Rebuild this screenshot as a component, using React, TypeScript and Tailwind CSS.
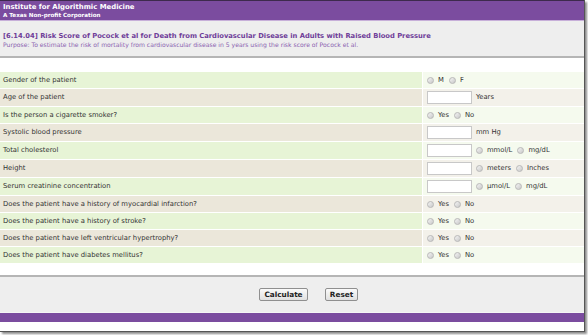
import React from 'react';

type Row = {
  label: string;
  kind: 'radio' | 'input';
  unit?: string;
  options?: string[];
};

const rows: Row[] = [
  { label: 'Gender of the patient', kind: 'radio', options: ['M', 'F'] },
  { label: 'Age of the patient', kind: 'input', unit: 'Years' },
  { label: 'Is the person a cigarette smoker?', kind: 'radio', options: ['Yes', 'No'] },
  { label: 'Systolic blood pressure', kind: 'input', unit: 'mm Hg' },
  { label: 'Total cholesterol', kind: 'input', options: ['mmol/L', 'mg/dL'] },
  { label: 'Height', kind: 'input', options: ['meters', 'Inches'] },
  { label: 'Serum creatinine concentration', kind: 'input', options: ['µmol/L', 'mg/dL'] },
  { label: 'Does the patient have a history of myocardial infarction?', kind: 'radio', options: ['Yes', 'No'] },
  { label: 'Does the patient have a history of stroke?', kind: 'radio', options: ['Yes', 'No'] },
  { label: 'Does the patient have left ventricular hypertrophy?', kind: 'radio', options: ['Yes', 'No'] },
  { label: 'Does the patient have diabetes mellitus?', kind: 'radio', options: ['Yes', 'No'] },
];

const Radio = () => (
  <span className="inline-block w-[7px] h-[7px] rounded-full border border-[#b8b8b8] bg-gradient-to-br from-[#f4f4f4] to-[#c9c9c9]" />
);

const Options: React.FC<{ options: string[] }> = ({ options }) => (
  <div className="flex items-center gap-[5px]">
    {options.map((o) => (
      <span key={o} className="flex items-center gap-[4px]">
        <Radio />
        <span>{o}</span>
      </span>
    ))}
  </div>
);

export default function App() {
  return (
    <div className="w-[588px] h-[335px] bg-white font-['DejaVu_Sans',sans-serif] text-[6.8px] text-[#333]">
      <div className="w-[585px] h-[332px] bg-white border-r border-b border-[#555] shadow-[2px_2px_2px_rgba(0,0,0,0.45)] flex flex-col">
        <div className="h-[20px] bg-[#7b4c9f] border-t border-[#3d2a4d] px-[3px] pt-[2px] text-white font-bold leading-[8px]">
          <div className="text-[6.9px]">Institute for Algorithmic Medicine</div>
          <div className="text-[5.6px]">A Texas Non-profit Corporation</div>
        </div>
        <div className="h-px bg-[#c7afd9]" />
        <div className="h-[37px] bg-[#eeeeee] border-b-2 border-[#b5b5b5] px-[3px] pt-[11px]">
          <div className="text-[6.75px] font-bold text-[#6f3d99] leading-[9px] whitespace-nowrap">
            [6.14.04] Risk Score of Pocock et al for Death from Cardiovascular Disease in Adults with Raised Blood Pressure
          </div>
          <div className="text-[6.1px] text-[#8a5fb0] leading-[8px]">
            Purpose: To estimate the risk of mortality from cardiovascular disease in 5 years using the risk score of Pocock et al.
          </div>
        </div>
        <div className="h-[14px]" />
        <div className="grid grid-cols-[422px_1fr] gap-y-px gap-x-px">
          {rows.map((r, i) => {
            const even = i % 2 === 0;
            const h = r.kind === 'input' ? 'h-[17px]' : 'h-[16px]';
            return (
              <React.Fragment key={r.label}>
                <div className={`${h} flex items-center px-[3px] ${even ? 'bg-[#e7f4d6]' : 'bg-[#ebe7da]'}`}>
                  {r.label}
                </div>
                <div className={`${h} flex items-center gap-[4px] pl-[4px] ${even ? 'bg-[#f5faee]' : 'bg-[#f3f1ea]'}`}>
                  {r.kind === 'input' && (
                    <span className="inline-block w-[45px] h-[13px] bg-white border border-[#c8c8c8]" />
                  )}
                  {r.unit && <span>{r.unit}</span>}
                  {r.options && <Options options={r.options} />}
                </div>
              </React.Fragment>
            );
          })}
        </div>
        <div className="flex-1" />
        <div className="h-[37px] bg-[#eeeeee] border-t-2 border-[#b5b5b5] flex items-center pl-[259px] gap-[17px]">
          <button className="h-[13px] w-[49px] bg-gradient-to-b from-[#fafafa] to-[#e0e0e0] border border-[#8f8f8f] rounded-[2px] text-[7.3px] font-bold text-[#222] leading-none">
            Calculate
          </button>
          <button className="h-[13px] w-[33px] bg-gradient-to-b from-[#fafafa] to-[#e0e0e0] border border-[#8f8f8f] rounded-[2px] text-[7.3px] font-bold text-[#222] leading-none">
            Reset
          </button>
        </div>
        <div className="h-px bg-[#f5f5f5]" />
        <div className="h-[9px] bg-[#7b4c9f]" />
        <div className="h-[9px] bg-white" />
      </div>
    </div>
  );
}
